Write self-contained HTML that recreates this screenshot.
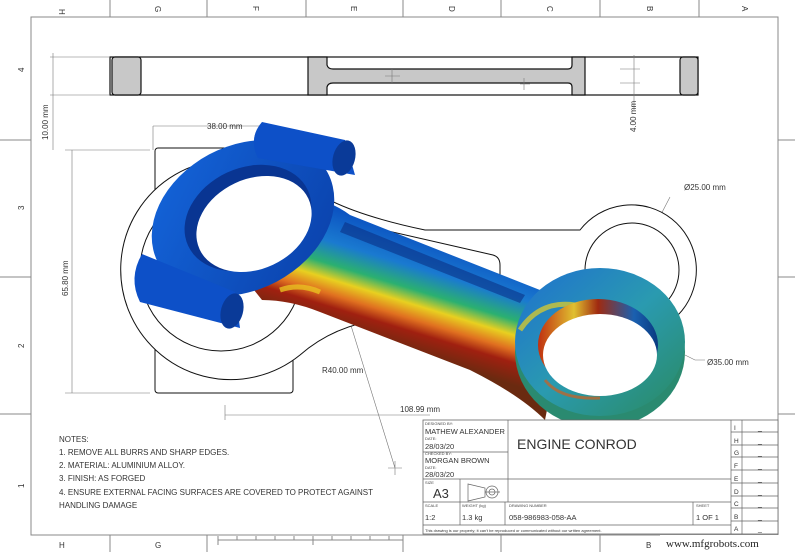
<!DOCTYPE html>
<html><head><meta charset="utf-8"><style>
html,body{margin:0;padding:0;background:#fff;}
svg{display:block;font-family:"Liberation Sans",sans-serif;}
.t{font-size:8px;fill:#333;}
.s{font-size:4px;fill:#444;}
</style></head><body>
<svg width="795" height="552" viewBox="0 0 795 552" xmlns="http://www.w3.org/2000/svg">
<defs>
<linearGradient id="sh" gradientUnits="userSpaceOnUse" x1="400" y1="225" x2="365" y2="340">
<stop offset="0" stop-color="#0a4fc0"/><stop offset="0.3" stop-color="#1a7ad0"/><stop offset="0.48" stop-color="#2bb070"/><stop offset="0.6" stop-color="#e8d020"/><stop offset="0.72" stop-color="#e07020"/><stop offset="0.82" stop-color="#a02010"/><stop offset="1" stop-color="#6a2a10"/>
</linearGradient>
<linearGradient id="bl" x1="0" y1="0" x2="1" y2="1"><stop offset="0" stop-color="#1466dc"/><stop offset="1" stop-color="#0a3fa8"/></linearGradient>
<linearGradient id="sf" x1="0" y1="0" x2="1" y2="1"><stop offset="0" stop-color="#1e6fd0"/><stop offset="0.5" stop-color="#2a9ab0"/><stop offset="1" stop-color="#2a8a60"/></linearGradient>
<linearGradient id="iw" x1="0" y1="0" x2="1" y2="0"><stop offset="0" stop-color="#c03010"/><stop offset="0.3" stop-color="#e0c030"/><stop offset="0.5" stop-color="#a02a10"/><stop offset="0.8" stop-color="#1a60b0"/><stop offset="1" stop-color="#0a3a80"/></linearGradient>
</defs>
<g stroke="#888" stroke-width="1" fill="none">
<rect x="31" y="17" width="747" height="518"/>
<path d="M110 0V17M207 0V17M306 0V17M403 0V17M501 0V17M600 0V17M699 0V17M110 535V552M207 535V552M403 535V552M501 535V552M600 535V552M699 535V552M0 140H31M0 277H31M0 414H31M778 140H795M778 277H795M778 414H795"/>
<path d="M218 540H403M218 536V545M237 536V540M256 536V540M275 536V540M294 536V540M313 536V545M332 536V540M351 536V540M370 536V540M389 536V540"/>
</g>
<g class="t" font-size="8" fill="#444">
<text x="62" y="12" transform="rotate(90 62 9)">H</text><text x="155" y="12" transform="rotate(90 158 9)">G</text><text x="253" y="12" transform="rotate(90 256 9)">F</text><text x="351" y="12" transform="rotate(90 354 9)">E</text><text x="449" y="12" transform="rotate(90 452 9)">D</text><text x="547" y="12" transform="rotate(90 550 9)">C</text><text x="647" y="12" transform="rotate(90 650 9)">B</text><text x="742" y="12" transform="rotate(90 745 9)">A</text>
<text x="59" y="548">H</text><text x="155" y="548">G</text><text x="646" y="548">B</text>
<text x="18" y="72" transform="rotate(-90 21 69)">4</text><text x="18" y="210" transform="rotate(-90 21 207)">3</text><text x="18" y="348" transform="rotate(-90 21 345)">2</text><text x="18" y="488" transform="rotate(-90 21 485)">1</text>
</g>
<!-- top view -->
<g stroke="#111" stroke-width="1.2">
<rect x="110" y="57" width="588" height="38" fill="#fff"/>
<rect x="112" y="57" width="29" height="38" rx="3" fill="#c8c8c8"/>
<path d="M308 57H327V65Q328 69 333 69H568Q572 69 572 65V57H585V95H572V87Q572 83 568 83H333Q328 83 327 87V95H308Z" fill="#c8c8c8"/>
<rect x="680" y="57" width="18" height="38" rx="3" fill="#c8c8c8"/>
</g>
<g stroke="#777" stroke-width="0.6" fill="none">
<path d="M50 57H110M50 95H110M53 53V150M620 69H640M620 83H640M634 55V110M385 76H400M392 69V83M520 84H530M524 78V90M153 126V150M153 126H262"/>
<path d="M72 150V393M65 150H150M65 393H150M225 415H430M225 405V420M340 290L395 468M388 468H402M395 461V475M670 197L645 245M685 355L695 360H705M632 250V395M610 270H655"/>
</g>
<text class="t" x="207" y="129">38.00 mm</text>
<text class="t" x="48" y="140" transform="rotate(-90 48 140)">10.00 mm</text>
<text class="t" x="636" y="132" transform="rotate(-90 636 132)">4.00 mm</text>
<text class="t" x="68" y="296" transform="rotate(-90 68 296)">65.80 mm</text>
<text class="t" x="684" y="190">Ø25.00 mm</text>
<text class="t" x="707" y="365">Ø35.00 mm</text>
<text class="t" x="322" y="373">R40.00 mm</text>
<text class="t" x="400" y="412">108.99 mm</text>
<text class="t" x="645" y="248" transform="rotate(-90 648 245)">A</text>
<!-- front view drawing -->
<g stroke="#111" stroke-width="1" fill="none">
<rect x="155" y="148" width="138" height="245" rx="3"/>
<path d="M221 160A110 110 0 1 0 300 355Q340 320 400 318L590 320A65 65 0 1 0 580 230L425 230Q330 210 300 180A110 110 0 0 0 221 160Z" fill="#fff"/>
<circle cx="221" cy="270" r="81"/>
<circle cx="632" cy="270" r="47"/>
<path d="M318 215L493 255Q500 257 500 265V275M585 320Q600 335 640 335"/>
</g>
<!-- conrod 3D: shank -->
<path d="M300 195Q330 200 350 215L545 292L560 345L545 420Q520 395 470 370L320 312Q290 300 262 300L250 285Z" fill="url(#sh)"/>
<path d="M345 222L525 295L520 303L340 232Z" fill="#0a2c80" opacity="0.55"/>
<!-- small end -->
<ellipse cx="600" cy="352" rx="85" ry="76" fill="#2a8a70"/>
<ellipse cx="600" cy="342" rx="85" ry="74" fill="url(#sf)"/>
<path d="M520 330Q540 300 575 305" stroke="#e8d020" stroke-width="5" fill="none" opacity="0.7"/>
<ellipse cx="598" cy="345" rx="60" ry="46" fill="url(#iw)"/>
<ellipse cx="600" cy="355" rx="57" ry="41" fill="#fff"/>
<path d="M545 380Q560 400 600 398" stroke="#d06020" stroke-width="3" fill="none" opacity="0.7"/>
<!-- big end -->
<ellipse cx="243" cy="218" rx="96" ry="72" transform="rotate(-28 243 218)" fill="url(#bl)"/>
<ellipse cx="248" cy="218" rx="66" ry="50" transform="rotate(-25 248 218)" fill="#093592"/>
<ellipse cx="254" cy="224" rx="60" ry="45" transform="rotate(-25 254 224)" fill="#fff"/>
<path d="M262 122L345 140L355 175L258 158Q248 138 262 122Z" fill="#0d50c8"/>
<ellipse cx="344" cy="158" rx="11" ry="18" transform="rotate(15 344 158)" fill="#0a3a98"/>
<path d="M142 254L235 292L240 328L140 302Q128 278 142 254Z" fill="#0d50c8"/>
<ellipse cx="232" cy="311" rx="11" ry="18" transform="rotate(15 232 311)" fill="#0a3a98"/>
<path d="M280 290Q300 283 320 292" stroke="#e8c020" stroke-width="5" fill="none" opacity="0.8"/>
<!-- notes -->
<g class="t" font-size="8.5" fill="#333">
<text x="59" y="442">NOTES:</text>
<text x="59" y="455">1. REMOVE ALL BURRS AND SHARP EDGES.</text>
<text x="59" y="468">2. MATERIAL: ALUMINIUM ALLOY.</text>
<text x="59" y="481">3. FINISH: AS FORGED</text>
<text x="59" y="495">4. ENSURE EXTERNAL FACING SURFACES ARE COVERED TO PROTECT AGAINST</text>
<text x="59" y="508">HANDLING DAMAGE</text>
</g>
<!-- title block -->
<g stroke="#666" stroke-width="0.8" fill="#fff">
<rect x="423" y="420" width="355" height="114"/>
</g>
<g stroke="#666" stroke-width="0.7" fill="none">
<path d="M508 420V502M423 452H508M423 479H731M423 502H731M423 525H731M460 479V525M505 502V525M693 502V525M731 420V534M742 420V534"/>
<path d="M731 432H778M731 445H778M731 457H778M731 470H778M731 483H778M731 496H778M731 508H778M731 521H778"/>
<path d="M468 484L485 488V497L468 501ZM485 492H500"/><circle cx="492" cy="492" r="6"/><circle cx="492" cy="492" r="3"/>
</g>
<g fill="#333">
<text class="s" x="425" y="425">DESIGNED BY:</text><text x="425" y="434" font-size="7.5">MATHEW ALEXANDER</text>
<text class="s" x="425" y="440">DATE:</text><text x="425" y="449" font-size="7.5">28/03/20</text>
<text class="s" x="425" y="455">CHECKED BY:</text><text x="425" y="463" font-size="7.5">MORGAN BROWN</text>
<text class="s" x="425" y="469">DATE:</text><text x="425" y="477" font-size="7.5">28/03/20</text>
<text class="s" x="425" y="484">SIZE</text><text x="433" y="498" font-size="13">A3</text>
<text x="517" y="449" font-size="14">ENGINE CONROD</text>
<text class="s" x="425" y="507">SCALE</text><text x="425" y="520" font-size="7.5">1:2</text>
<text class="s" x="462" y="507">WEIGHT (kg)</text><text x="462" y="520" font-size="7.5">1.3 kg</text>
<text class="s" x="509" y="507">DRAWING NUMBER</text><text x="509" y="520" font-size="7.5">058-986983-058-AA</text>
<text class="s" x="696" y="507">SHEET</text><text x="696" y="520" font-size="7.5">1 OF 1</text>
<text x="425" y="532" font-size="4">This drawing is our property; it can't be reproduced or communicated without our written agreement.</text>
<g font-size="6.5"><text x="734" y="430">I</text><text x="734" y="443">H</text><text x="734" y="455">G</text><text x="734" y="468">F</text><text x="734" y="481">E</text><text x="734" y="494">D</text><text x="734" y="506">C</text><text x="734" y="519">B</text><text x="734" y="531">A</text></g>
<g font-size="7"><text x="758" y="430">_</text><text x="758" y="443">_</text><text x="758" y="455">_</text><text x="758" y="468">_</text><text x="758" y="481">_</text><text x="758" y="494">_</text><text x="758" y="506">_</text><text x="758" y="519">_</text><text x="758" y="531">_</text></g>
</g>
<rect x="660" y="535" width="135" height="17" fill="#fff"/>
<text x="666" y="547" font-family="Liberation Serif,serif" font-size="11" fill="#222">www.mfgrobots.com</text>
</svg>
</body></html>
